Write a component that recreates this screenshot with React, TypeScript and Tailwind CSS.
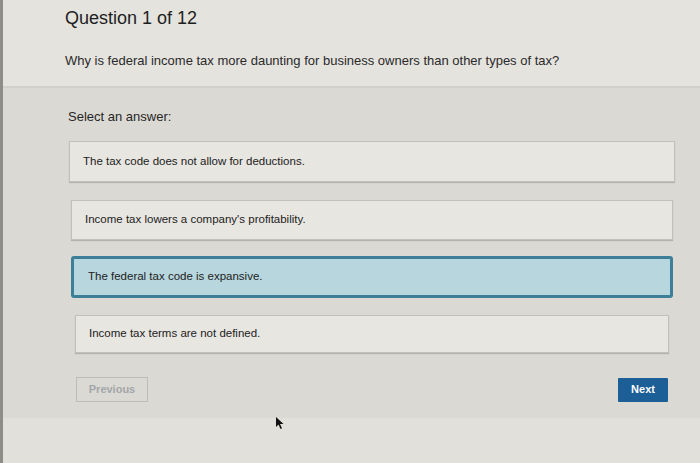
import React from "react";

const options = [
  { text: "The tax code does not allow for deductions.", ml: "ml-[66px]", w: "w-[606px]", h: "h-[41px]", mt: "mt-[16px]", pl: "pl-[13px]", selected: false },
  { text: "Income tax lowers a company's profitability.", ml: "ml-[68px]", w: "w-[602px]", h: "h-[40px]", mt: "mt-[18px]", pl: "pl-[13px]", selected: false },
  { text: "The federal tax code is expansive.", ml: "ml-[68px]", w: "w-[602px]", h: "h-[42px]", mt: "mt-[16px]", pl: "pl-[14px]", selected: true },
  { text: "Income tax terms are not defined.", ml: "ml-[72px]", w: "w-[594px]", h: "h-[38px]", mt: "mt-[17px]", pl: "pl-[13px]", selected: false },
];

export default function App() {
  return (
    <div
      className="w-[700px] h-[463px] flex flex-col border-l-[3px] border-[#8e8d8a] overflow-hidden text-[#262626]"
      style={{ fontFamily: '"Liberation Sans", Arial, sans-serif' }}
    >
      <div className="h-[86px] bg-[#e5e3de] pl-[62px] flex flex-col">
        <div className="mt-[6px] text-[18px] leading-[24px] text-[#1e1e1e]">Question 1 of 12</div>
        <div className="mt-[23px] text-[13px] leading-[16px] text-[#2a2a2a]">
          Why is federal income tax more daunting for business owners than other types of tax?
        </div>
      </div>
      <div className="h-[2px] bg-[#d2d0ca]" />
      <div className="h-[330px] bg-[#dbd9d3] flex flex-col">
        <div className="ml-[65px] mt-[21px] text-[13px] leading-[16px] text-[#262626]">Select an answer:</div>
        {options.map((o, i) => (
          <div
            key={i}
            className={
              o.selected
                ? `${o.ml} ${o.w} ${o.h} ${o.mt} ${o.pl} flex items-center rounded-[3px] border-[3px] border-[#3d7f98] bg-[#b7d6dd] text-[11.5px] text-[#222]`
                : `${o.ml} ${o.w} ${o.h} ${o.mt} ${o.pl} flex items-center border border-[#c2c0bb] bg-[#e8e6e1] shadow-[0_1px_1px_rgba(0,0,0,0.18)] text-[11.5px] text-[#222]`
            }
          >
            {o.text}
          </div>
        ))}
        <div className="flex items-center justify-between mt-[24px] ml-[73px] mr-[32px]">
          <div className="w-[72px] h-[25px] border border-[#bcbcb8] flex items-center justify-center text-[11px] font-bold text-[#a3a7aa]">
            Previous
          </div>
          <div className="w-[50px] h-[24px] bg-[#1c5e96] flex items-center justify-center text-[11px] font-bold text-white rounded-[1px]">
            Next
          </div>
        </div>
      </div>
      <div className="flex-1 bg-[#e2e0db] relative">
        <svg
          className="absolute left-[272px] top-[-2px]"
          width="12"
          height="14"
          viewBox="0 0 12 14"
        >
          <path d="M1 1 L1 11 L3.5 8.5 L5.5 13 L7 12.3 L5 8 L8.5 8 Z" fill="#111" />
        </svg>
      </div>
    </div>
  );
}
